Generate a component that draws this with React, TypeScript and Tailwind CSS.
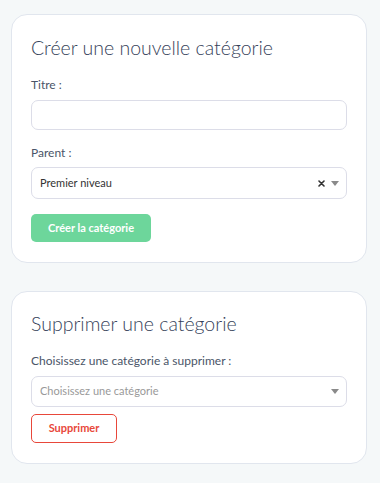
import React from "react";

function Caret() {
  return (
    <svg width="8" height="5" viewBox="0 0 8 5" className="shrink-0">
      <path d="M0 0 L8 0 L4 5 Z" fill="#8a8a8a" />
    </svg>
  );
}

function Cross() {
  return (
    <svg width="7" height="7" viewBox="0 0 7 7" className="shrink-0">
      <path d="M1 1 L6 6 M6 1 L1 6" stroke="#333" strokeWidth="1.6" strokeLinecap="round" />
    </svg>
  );
}

export default function App() {
  return (
    <div
      className="min-h-[483px] w-[380px] bg-[#f5f8f9] pl-[11px] pr-[13px] pt-[14px] pb-[18px] flex flex-col gap-[28px]"
      style={{ fontFamily: '"Lato", "Open Sans", sans-serif' }}
    >
      <div className="bg-white border border-[#e1e6ee] rounded-[16px] px-[19px] pt-[21px] pb-[20px]">
        <h2 className="text-[19.5px] leading-[24px] text-[#36425a] font-light">Créer une nouvelle catégorie</h2>
        <div className="mt-[17px] text-[12px] leading-[16px] text-[#4a5568]">Titre :</div>
        <div className="mt-[7px] h-[30px] rounded-[7px] border border-[#dcdde8] bg-white"></div>
        <div className="mt-[15px] text-[12px] leading-[16px] text-[#4a5568]">Parent :</div>
        <div className="mt-[6px] h-[32px] rounded-[7px] border border-[#dcdde8] bg-white flex items-center pl-[8px] pr-[7px]">
          <span className="flex-1 text-[11px] text-[#333]">Premier niveau</span>
          <Cross />
          <span className="w-[6px]" />
          <Caret />
        </div>
        <button className="mt-[15px] h-[28px] w-[120px] rounded-[5px] bg-[#6dd69b] text-white text-[11px] font-bold">
          Créer la catégorie
        </button>
      </div>

      <div className="bg-white border border-[#e1e6ee] rounded-[16px] px-[19px] pt-[20px] pb-[20px]">
        <h2 className="text-[19.5px] leading-[24px] text-[#36425a] font-light">Supprimer une catégorie</h2>
        <div className="mt-[17px] text-[12px] leading-[16px] text-[#4a5568]">Choisissez une catégorie à supprimer :</div>
        <div className="mt-[7px] h-[31px] rounded-[7px] border border-[#dcdde8] bg-white flex items-center pl-[8px] pr-[7px]">
          <span className="flex-1 text-[11px] text-[#999]">Choisissez une catégorie</span>
          <Caret />
        </div>
        <button className="mt-[7px] h-[29px] w-[86px] rounded-[5px] border border-[#e8473a] bg-white text-[#e8473a] text-[11px] font-bold">
          Supprimer
        </button>
      </div>
    </div>
  );
}
